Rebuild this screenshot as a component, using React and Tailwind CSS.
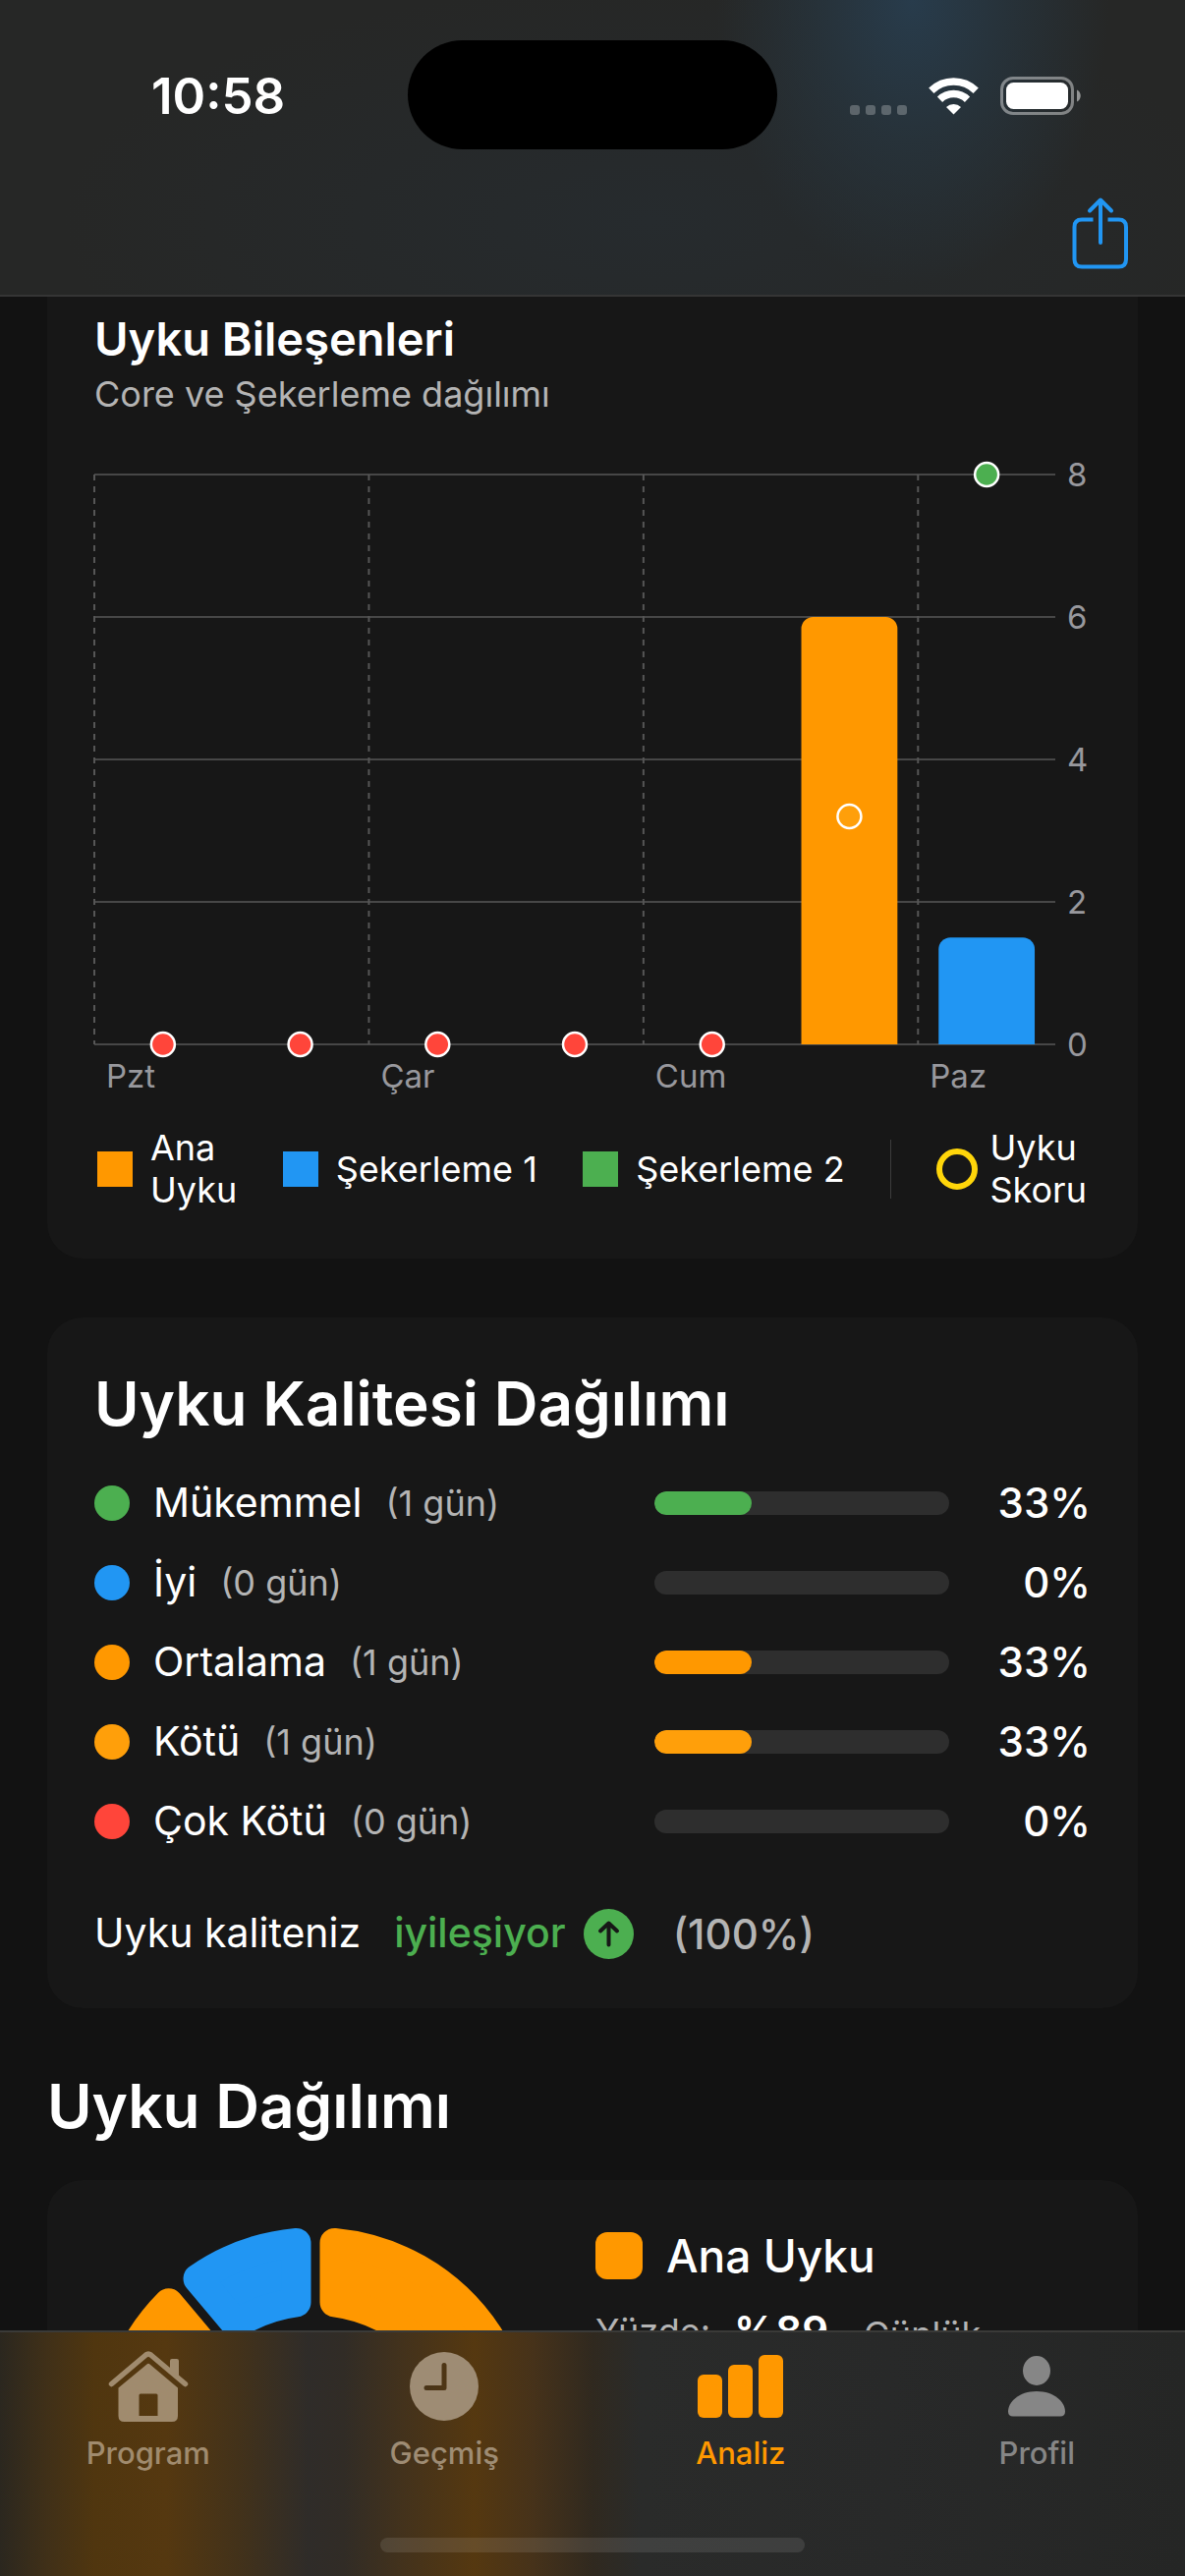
const FONT = "font-['Inter','Liberation_Sans',sans-serif]";

const days = [
  { label: "Pzt", score: 0 },
  { label: "", score: 0 },
  { label: "Çar", score: 0 },
  { label: "", score: 0 },
  { label: "Cum", score: 0 },
  { label: "", score: 3.2, hours: 6, color: "#ff9800" },
  { label: "Paz", score: 8, hours: 1.5, color: "#2196f3" },
];

const scoreColor = (s) => (s >= 6 ? "#4caf50" : s > 2 ? "#ff9f0a" : "#ff453a");

const PLOT_W = 978;
const PLOT_H = 580;
const STEP = PLOT_W / days.length;
const yFor = (v) => PLOT_H - (v / 8) * PLOT_H;

function SleepChart() {
  return (
    <div className="mt-[60px]">
      <div className="flex gap-3">
        <svg
          viewBox={`0 0 ${PLOT_W} ${PLOT_H}`}
          className="min-w-0 flex-1 overflow-visible"
          role="img"
          aria-label="Uyku Bileşenleri"
        >
          {[0, 2, 4, 6, 8].map((v) => (
            <line key={v} x1="0" x2={PLOT_W} y1={yFor(v)} y2={yFor(v)} stroke="#474747" strokeWidth="2" />
          ))}
          {[0, 2, 4, 6].map((i) => (
            <line
              key={i}
              x1={i * STEP}
              x2={i * STEP}
              y1="0"
              y2={PLOT_H}
              stroke="#565656"
              strokeWidth="2"
              strokeDasharray="6 6"
            />
          ))}
          {days.map((d, i) => {
            if (!d.hours) return null;
            const x = i * STEP + STEP * 0.15;
            const w = STEP * 0.7;
            const y = yFor(d.hours);
            return (
              <path
                key={i}
                fill={d.color}
                d={`M${x} ${PLOT_H}V${y + 12}a12 12 0 0 1 12 -12H${x + w - 12}a12 12 0 0 1 12 12V${PLOT_H}z`}
              />
            );
          })}
          {days.map((d, i) => (
            <circle
              key={i}
              cx={(i + 0.5) * STEP}
              cy={yFor(d.score)}
              r="12"
              fill={scoreColor(d.score)}
              stroke="#fff"
              strokeWidth="2.5"
            />
          ))}
        </svg>
        <div className="-my-5 flex w-6 flex-col justify-between text-[33px] leading-10 text-[#98989d]">
          {[8, 6, 4, 2, 0].map((v) => (
            <span key={v}>{v}</span>
          ))}
        </div>
      </div>
      <div className="mr-9 grid grid-cols-7 pt-3 text-[33px] leading-10 text-[#98989d]">
        {days.map((d, i) => (
          <span key={i} className="pl-3">
            {d.label}
          </span>
        ))}
      </div>
    </div>
  );
}

function Swatch({ color, children }) {
  return (
    <div className="flex items-center gap-[18px]">
      <span className="size-9 shrink-0" style={{ background: color }} />
      <span>{children}</span>
    </div>
  );
}

const quality = [
  { name: "Mükemmel", days: 1, pct: 33, color: "#4caf50" },
  { name: "İyi", days: 0, pct: 0, color: "#2196f3" },
  { name: "Ortalama", days: 1, pct: 33, color: "#ff9800" },
  { name: "Kötü", days: 1, pct: 33, color: "#ff9f0a" },
  { name: "Çok Kötü", days: 0, pct: 0, color: "#ff453a" },
];

function ringSegment(startDeg, endDeg) {
  const round = 15;
  const inset = 4.5 + round;
  const ro = 225 - round;
  const ri = 135 + round;
  const rad = Math.PI / 180;
  const pt = (r, a) => `${225 + r * Math.sin(a)} ${225 - r * Math.cos(a)}`;
  const so = startDeg * rad + Math.asin(inset / ro);
  const eo = endDeg * rad - Math.asin(inset / ro);
  const si = startDeg * rad + Math.asin(inset / ri);
  const ei = endDeg * rad - Math.asin(inset / ri);
  const large = endDeg - startDeg > 180 ? 1 : 0;
  return `M${pt(ro, so)}A${ro} ${ro} 0 ${large} 1 ${pt(ro, eo)}L${pt(ri, ei)}A${ri} ${ri} 0 ${large} 0 ${pt(ri, si)}z`;
}

function Donut() {
  return (
    <svg viewBox="0 0 450 450" className="w-[450px] shrink-0" role="img" aria-label="Uyku Dağılımı">
      <path d={ringSegment(0, 320)} fill="#ff9800" stroke="#ff9800" strokeWidth="30" strokeLinejoin="round" />
      <path d={ringSegment(320, 360)} fill="#2196f3" stroke="#2196f3" strokeWidth="30" strokeLinejoin="round" />
    </svg>
  );
}

function HomeIcon() {
  return (
    <svg viewBox="0 0 82 72" className="h-[72px] w-[82px]" fill="currentColor" aria-hidden="true">
      <path
        d="M3.500 33.500 38.500 4Q41 2 43.500 4L78.500 33.500"
        fill="none"
        stroke="currentColor"
        strokeWidth="5.500"
        strokeLinecap="round"
        strokeLinejoin="round"
      />
      <path d="M63 20V10q0-2 2-2h5q2 0 2 2v17.500z" />
      <path
        fillRule="evenodd"
        d="M39.500 13.500Q41 12 42.500 13.500L71 37.500v28.500q0 6-6 6H16.500q-6 0-6-6V37.500zM33 43.500q-1.500 0-1.500 1.500V66h19V45Q50.500 43.500 49 43.500z"
      />
    </svg>
  );
}

function ClockIcon() {
  return (
    <svg viewBox="0 0 70 70" className="size-[70px]" fill="currentColor" aria-hidden="true">
      <mask id="hands">
        <rect width="70" height="70" fill="#fff" />
        <path d="M35 13.500V36.500H17" fill="none" stroke="#000" strokeWidth="5" strokeLinecap="round" strokeLinejoin="round" />
      </mask>
      <circle cx="35" cy="35" r="35" mask="url(#hands)" />
    </svg>
  );
}

function BarsIcon() {
  return (
    <svg viewBox="0 0 87 64" className="h-16 w-[87px]" fill="currentColor" aria-hidden="true">
      <rect x="0" y="20" width="25" height="44" rx="6" />
      <rect x="31" y="10" width="25" height="54" rx="6" />
      <rect x="62" y="0" width="25" height="64" rx="6" />
    </svg>
  );
}

function PersonIcon() {
  return (
    <svg viewBox="0 0 58 62" className="h-[62px] w-[58px]" fill="currentColor" aria-hidden="true">
      <ellipse cx="29" cy="15" rx="14" ry="15" />
      <path d="M5 61.500q-5 0-5-5C0 47 11 36 29 36s29 11 29 20.500q0 5-5 5z" />
    </svg>
  );
}

const tabs = [
  { name: "Program", icon: HomeIcon, tone: "text-[#a08b6e]" },
  { name: "Geçmiş", icon: ClockIcon, tone: "text-[#9e8c74]" },
  { name: "Analiz", icon: BarsIcon, tone: "text-[#ff9800]", active: true },
  { name: "Profil", icon: PersonIcon, tone: "text-[#868686]" },
];

function StatusBar() {
  return (
    <div className="grid grid-cols-[1fr_376px_1fr] items-center pt-[41px] text-white">
      <span className="pt-0.5 pl-[154px] text-[51px] leading-[60px] font-semibold">10:58</span>
      <span className="h-[111px] rounded-full bg-black" />
      <div className="flex items-center justify-end gap-[22px] pt-0.5 pr-[105px]">
        <div className="flex gap-1.5 pt-7">
          {[0, 1, 2, 3].map((i) => (
            <span key={i} className="size-2.5 rounded-[3px] bg-white/25" />
          ))}
        </div>
        <svg viewBox="0 0 51 38" className="h-[38px] w-[51px]" fill="none" stroke="#fff" aria-label="Wi-Fi">
          <path d="M2.800 13.300a32.500 32.500 0 0 1 45.400 0" strokeWidth="7.500" />
          <path d="M11.500 22.300a20 20 0 0 1 28 0" strokeWidth="7.500" />
          <path d="M25.500 37.500 18 30a11 11 0 0 1 15 0z" fill="#fff" stroke="none" />
        </svg>
        <svg viewBox="0 0 83 39" className="h-[39px] w-[83px]" aria-label="Pil">
          <rect x="1.500" y="1.500" width="72" height="36" rx="11.500" fill="none" stroke="#fff" strokeOpacity=".42" strokeWidth="3" />
          <rect x="6" y="6" width="63" height="27" rx="7.500" fill="#fff" />
          <path d="M78 13.500c5 2 5 10 0 12z" fill="#fff" fillOpacity=".5" />
        </svg>
      </div>
    </div>
  );
}

export default function App() {
  return (
    <div className={`flex h-screen flex-col overflow-hidden bg-[#121212] text-white ${FONT}`}>
      <header className="shrink-0 border-b-2 border-[#353535] bg-[#262726] bg-[radial-gradient(ellipse_200px_290px_at_77%_0%,#283c4c,#27343dcc_50%,transparent),radial-gradient(ellipse_600px_240px_at_55%_75%,#262b2e,transparent)]">
        <StatusBar />
        <div className="flex justify-end pt-12 pr-[55px] pb-[25px]">
          <button type="button" aria-label="Paylaş" className="text-[#2196f3]">
            <svg
              viewBox="0 0 62 75"
              className="h-[75px] w-[62px]"
              fill="none"
              stroke="currentColor"
              strokeWidth="4"
              strokeLinecap="round"
              strokeLinejoin="round"
              aria-hidden="true"
            >
              <path d="M23.500 23.500H12q-7.500 0-7.500 7.500v33q0 7.500 7.500 7.500h37.500q7.500 0 7.500-7.500V31Q57 23.500 49.500 23.500H38.500" strokeLinecap="butt" />
              <path d="M31 47V4M20 14.500 31 3.500l11 11" />
            </svg>
          </button>
        </div>
      </header>

      <main className="min-h-0 flex-1 overflow-hidden px-12">
        <section className="rounded-b-[36px] bg-[#171717] px-12 pb-12">
          <h2 className="pt-[13px] text-[47px] leading-[60px] font-semibold">Uyku Bileşenleri</h2>
          <p className="mt-1 text-[36px] leading-[44px] text-[#b4b4b4]">Core ve Şekerleme dağılımı</p>
          <SleepChart />
          <div className="mt-8 flex items-center justify-between pr-1 pl-[3px] text-[36px] leading-[43px]">
            <Swatch color="#ff9800">
              Ana
              <br />
              Uyku
            </Swatch>
            <Swatch color="#2196f3">Şekerleme 1</Swatch>
            <Swatch color="#4caf50">Şekerleme 2</Swatch>
            <span className="h-[60px] w-px bg-[#3c3c3c]" />
            <div className="flex items-center gap-3">
              <span className="size-[42px] shrink-0 rounded-full border-6 border-[#ffd60a]" />
              <span>
                Uyku
                <br />
                Skoru
              </span>
            </div>
          </div>
        </section>

        <section className="mt-[60px] rounded-[36px] bg-[#171717] px-12 pt-12 pb-[46px]">
          <h2 className="text-[62px] leading-20 font-semibold">Uyku Kalitesi Dağılımı</h2>
          <ul className="mt-5">
            {quality.map((q) => (
              <li key={q.name} className="flex h-[81px] items-center">
                <span className="size-9 rounded-full" style={{ background: q.color }} />
                <span className="ml-6 text-[41px]">{q.name}</span>
                <span className="ml-6 text-[36px] text-[#b4b4b4]">({q.days} gün)</span>
                <div className="ml-auto h-6 w-[300px] overflow-hidden rounded-full bg-[#2e2e2e]">
                  <div className="h-full rounded-full" style={{ width: `${q.pct}%`, background: q.color }} />
                </div>
                <span className="w-[144px] text-right text-[42px] font-medium">{q.pct}%</span>
              </li>
            ))}
          </ul>
          <p className="mt-11 flex h-[60px] items-center text-[41px]">
            <span>Uyku kaliteniz</span>
            <span className="ml-[34px] font-medium text-[#4caf50]">iyileşiyor</span>
            <svg viewBox="0 0 51 51" className="ml-[18px] size-[51px]" aria-hidden="true">
              <circle cx="25.500" cy="25.500" r="25.500" fill="#4caf50" />
              <path d="M25.500 36.500V15M17 22.500l8.500-8 8.500 8" fill="none" stroke="#171717" strokeWidth="4" strokeLinecap="round" strokeLinejoin="round" />
            </svg>
            <span className="ml-10 text-[42px] font-medium text-[#b4b4b4]">(100%)</span>
          </p>
        </section>

        <h2 className="mt-[60px] text-[62px] leading-20 font-semibold">Uyku Dağılımı</h2>
        <section className="mt-[35px] flex items-start gap-[60px] rounded-[36px] bg-[#171717] p-12">
          <Donut />
          <div className="min-w-0 flex-1">
            <div className="flex h-[58px] items-center gap-6">
              <span className="size-12 rounded-xl bg-[#ff9800]" />
              <span className="text-[46px] font-medium">Ana Uyku</span>
            </div>
            <div className="mt-[18px] flex items-start gap-6 text-[36px] leading-[60px] text-[#b4b4b4]">
              <span>Yüzde:</span>
              <span className="text-[42px] font-semibold text-white">%89</span>
              <span className="pl-3 leading-[66px]">Günlük</span>
            </div>
          </div>
        </section>
      </main>

      <nav className="shrink-0 border-t-2 border-[#3a3a38] bg-[linear-gradient(90deg,#2b271f_0%,#403018_4%,#50360f_8%,#553810_14%,#43321a_20%,#2f2c29_26%,#312c26_29%,#43321c_34%,#553810_40%,#46321a_45%,#30291f_50%,#2a2b2a_54%,#282929_75%,#252625_100%)]">
        <div className="grid grid-cols-4">
          {tabs.map(({ name, icon: Icon, tone, active }) => (
            <button
              key={name}
              type="button"
              aria-current={active ? "page" : undefined}
              className={`flex flex-col items-center pt-[17px] ${tone}`}
            >
              <span className="flex h-[76px] items-center">
                <Icon />
              </span>
              <span className="mt-2.5 text-[31px] leading-10 font-medium">{name}</span>
            </button>
          ))}
        </div>
        <div className="mx-auto mt-[66px] mb-6 h-[15px] w-[432px] rounded-full bg-white/10" />
      </nav>
    </div>
  );
}
